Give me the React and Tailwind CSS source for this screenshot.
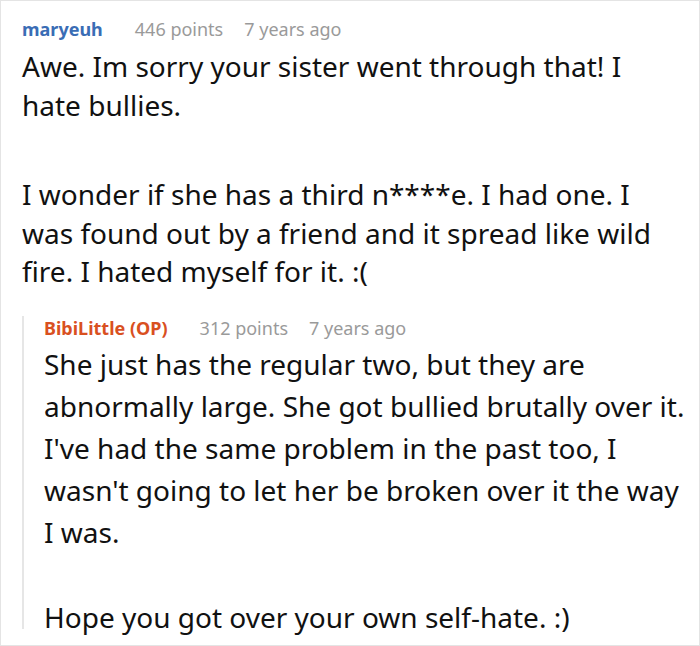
import React from 'react';

const font = { fontFamily: '"Noto Sans", "Open Sans", sans-serif' };

const Meta = ({ name, color, points, age }) => (
  <div className="flex items-baseline text-[18px] leading-[24px]">
    <span className={`font-bold ${color}`}>{name}</span>
    <span className="ml-[32px] text-[#9a9a9a]">{points}</span>
    <span className="ml-[21px] text-[#9a9a9a]">{age}</span>
  </div>
);

export default function App() {
  return (
    <div
      className="w-[700px] h-[646px] overflow-hidden bg-white border border-[#e4e4e4] pt-[16px] pl-[21px] pr-[14px] text-[#111]"
      style={font}
    >
      <Meta name="maryeuh" color="text-[#3a6db5]" points="446 points" age="7 years ago" />
      <div className="mt-[6px] text-[28px] leading-[38.5px]">
        <p>Awe. Im sorry your sister went through that! I hate bullies.</p>
        <p className="mt-[51px]">
          I wonder if she has a third n****e. I had one. I was found out by a friend and it spread like wild fire. I hated myself for it. :(
        </p>
      </div>

      {/* reply */}
      <div className="mt-[25px] border-l-2 border-[#e6e6e6] pl-[20px]">
        <Meta name="BibiLittle (OP)" color="text-[#d9501f]" points="312 points" age="7 years ago" />
        <div className="mt-[3px] text-[28px]">
          <p className="leading-[42px]">
            She just has the regular two, but they are abnormally large. She got bullied brutally over it. I've had the same problem in the past too, I wasn't going to let her be broken over it the way I was.
          </p>
          <p className="mt-[52px] leading-[24px]">Hope you got over your own self-hate. :)</p>
        </div>
      </div>
    </div>
  );
}
